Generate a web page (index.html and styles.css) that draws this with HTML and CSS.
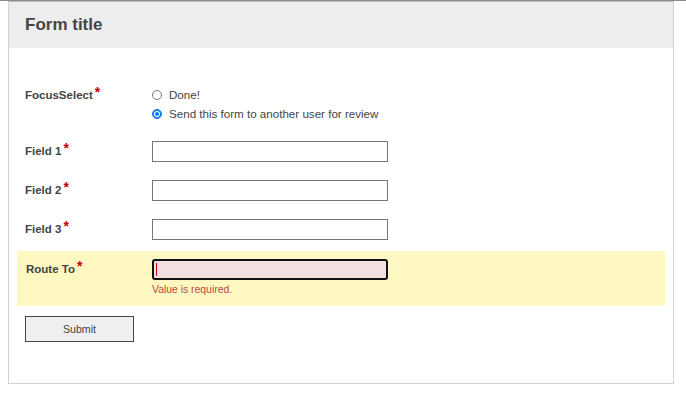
FILE: index.html
```html
<!DOCTYPE html>
<html lang="en">
<head>
    <meta charset="UTF-8">
    <meta name="viewport" content="width=device-width, initial-scale=1.0">
    <title>Form</title>
    <link rel="stylesheet" href="styles.css">
</head>
<body>
    <div class="page">
        <div class="card">
            <div class="card_head">
                <h1>Form title</h1>
            </div>
            <form class="card_body">
                <div class="row">
                    <label class="lbl">FocusSelect<span class="req">*</span></label>
                    <div class="options">
                        <label class="opt"><input type="radio" name="focus"> Done!</label>
                        <label class="opt"><input type="radio" name="focus" checked> Send this form to another user for review</label>
                    </div>
                </div>
                <div class="row">
                    <label class="lbl">Field 1<span class="req">*</span></label>
                    <input class="txt" type="text">
                </div>
                <div class="row">
                    <label class="lbl">Field 2<span class="req">*</span></label>
                    <input class="txt" type="text">
                </div>
                <div class="row">
                    <label class="lbl">Field 3<span class="req">*</span></label>
                    <input class="txt" type="text">
                </div>
                <div class="row row_error">
                    <label class="lbl">Route To<span class="req">*</span></label>
                    <div class="ctrl">
                        <div class="txt txt_focus"><span class="caret"></span></div>
                        <div class="err">Value is required.</div>
                    </div>
                </div>
                <div class="actions">
                    <button type="button" class="btn">Submit</button>
                </div>
            </form>
        </div>
    </div>
</body>
</html>
```

FILE: styles.css
```css
* {
    box-sizing: border-box;
}
body {
    margin: 0;
    border-top: 1px solid #8a8a8a;
    font-family: "Liberation Sans", Arial, sans-serif;
    color: #444;
}
.page {
    padding: 0 8px;
}
.card {
    width: 666px;
    border: 1px solid #d2d2d2;
    border-top-color: #bdbdbd;
}
.card_head {
    height: 46px;
    background-color: #ededed;
    display: flex;
    align-items: center;
    padding: 0 16px;
}
.card_head h1 {
    margin: 0;
    font-size: 17px;
    line-height: 20px;
    font-weight: bold;
    color: #454545;
}
.card_body {
    padding: 29px 8px 41px;
}
.row {
    display: flex;
    align-items: flex-start;
    padding: 8px 8px 10px;
}
.lbl {
    width: 127px;
    flex-shrink: 0;
    padding-top: 2px;
    font-size: 11.5px;
    line-height: 14px;
    font-weight: bold;
    color: #444;
}
.req {
    color: #c4000a;
    font-size: 14px;
    line-height: 10px;
    margin-left: 2px;
    vertical-align: 2px;
}
.options {
    display: flex;
    flex-direction: column;
}
.opt {
    height: 19px;
    display: flex;
    align-items: center;
    font-size: 11.6px;
    color: #444;
}
.opt input {
    appearance: none;
    width: 10px;
    height: 10px;
    margin: 0 7px 0 0;
    border: 1px solid #767676;
    border-radius: 50%;
    background: #fff;
}
.opt input:checked {
    border-color: #0b75f0;
    background: #0b75f0;
    box-shadow: inset 0 0 0 1px #0b75f0, inset 0 0 0 2px #fff;
}
.txt {
    width: 236px;
    height: 21px;
    margin: 0;
    border: 1px solid #767676;
    background: #fff;
    font: inherit;
}
.row_error {
    margin-top: 1px;
    padding-bottom: 9px;
    background-color: #fef7c1;
}
.row_error .lbl {
    padding-left: 1px;
}
.txt_focus {
    border: 2px solid #111;
    border-radius: 3px;
    background-color: #f2dfdf;
    display: flex;
    align-items: center;
    padding-left: 2px;
}
.caret {
    width: 1px;
    height: 13px;
    background-color: #c4000a;
}
.err {
    margin-top: 3px;
    font-size: 10.4px;
    line-height: 14px;
    color: #b94a48;
}
.actions {
    margin-top: 10px;
    padding-left: 8px;
}
.btn {
    width: 109px;
    height: 26px;
    margin: 0;
    border: 1px solid #444;
    background-color: #efefef;
    font-family: inherit;
    font-size: 10.6px;
    color: #444;
}
```
